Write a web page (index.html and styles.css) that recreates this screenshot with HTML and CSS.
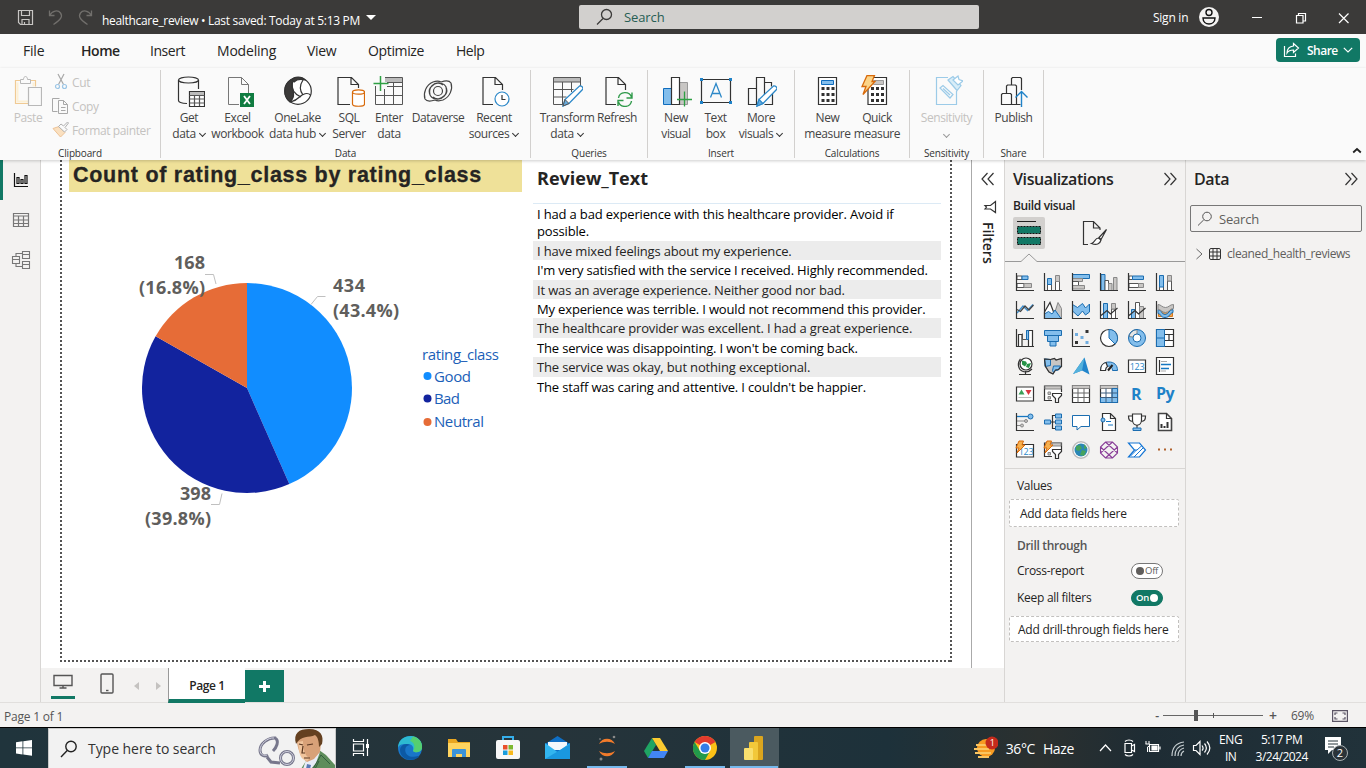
FILE: index.html
```html
<!DOCTYPE html>
<html lang="en">
<head>
<meta charset="utf-8">
<title>healthcare_review</title>
<link rel="stylesheet" href="styles.css">
</head>
<body>
<div class="app">
<header class="titlebar">
  <svg class="qat" width="84" height="20" viewBox="0 0 84 20" fill="none" stroke="#c8c6c4" stroke-width="1.2">
    <path d="M1.500 3.500h14v14H3.500l-2-2zM4.500 3.500v5h8v-5M5 17.500v-5h7v5M7.500 17.500v-2.500"/>
    <g stroke="#716f6c" stroke-width="1.300"><path d="M32.500 3.500v5h5M32.500 8.500c3-5 8.500-6 11-2.500s.5 6.500-7 11.500"/><path d="M74.500 3.500v5h-5M74.500 8.500c-3-5-8.500-6-11-2.500s-.5 6.500 7 11.500"/></g>
  </svg>
  <div class="doc-name">healthcare_review • Last saved: Today at 5:13 PM</div>
  <div class="caret-white"></div>
  <div class="top-search">
    <svg width="18" height="18" viewBox="0 0 18 18" fill="none" stroke="#3b3a39" stroke-width="1.300"><circle cx="10.500" cy="6.500" r="5"/><path d="M7 10.500L1 16.500"/></svg>
    <span>Search</span>
  </div>
  <div class="sign-in">Sign in</div>
  <svg class="avatar" width="20" height="20" viewBox="0 0 20 20"><circle cx="10" cy="10" r="10" fill="#f3f2f1"/><g fill="none" stroke="#111" stroke-width="1.400"><circle cx="10" cy="5.500" r="3"/><path d="M4 11h12c0 4-3 6-6 6s-6-2-6-6z"/></g></svg>
  <svg class="win-btns" width="100" height="14" viewBox="0 0 100 14" fill="none" stroke="#fff" stroke-width="1.200"><path d="M1 6.500h10M88 2.500l9.500 9.500M97.500 2.500L88 12"/><path d="M45.500 4.500h6.500v7.500h-6.500zM47.500 4.500v-2h7v7.500h-2"/></svg>
</header>

<nav class="tabs">
  <span class="tab t-file">File</span><span class="tab t-home">Home</span><span class="tab t-insert">Insert</span><span class="tab t-model">Modeling</span><span class="tab t-view">View</span><span class="tab t-opt">Optimize</span><span class="tab t-help">Help</span>
  <button class="share"><svg width="17" height="16" viewBox="0 0 17 16" fill="none" stroke="#fff" stroke-width="1.200"><path d="M1.500 4v10.500h11v-3"/><path d="M10.500 1.500l5 4.500-5 4.500V8c-3 0-5 .5-6.500 3 0-4 2.500-6.500 6.500-7z"/></svg><span>Share</span><svg width="10" height="6" viewBox="0 0 10 6" fill="none" stroke="#fff" stroke-width="1.200"><path d="M.8.8L5 5 9.200.8"/></svg></button>
</nav>

<section class="ribbon">
  <div class="group g-clip">
    <div class="items">
      <div class="cmd c-paste off"><svg width="28" height="32" viewBox="0 0 28 32" fill="none"><path d="M7.500 5.500h-6v23h13M16.500 5.500h5v6" stroke="#f0ca94" stroke-width="1.200"/><path d="M3.500 7.500v19H14M19.500 7.500v4" stroke="#fdf0d4" stroke-width="2"/><path d="M6.500 8.500v-4h3c0-4 4-4 4 0h3v4z" fill="#fafafa" stroke="#b8b8b8"/><path d="M14.500 12.500h13v18h-13z" fill="#fafafa" stroke="#b8b8b8" stroke-width="1.200"/></svg><span>Paste</span></div>
      <div class="clip-list off">
        <div><svg width="18" height="18" viewBox="0 0 18 18" fill="none" stroke="#a8a8a8" stroke-width="1.200"><path d="M6 1l5.500 10.500M12 1L6.500 11.500"/><g stroke="#9cc6e6"><circle cx="5.500" cy="13.500" r="2"/><circle cx="12.500" cy="13.500" r="2"/></g></svg><span>Cut</span></div>
        <div><svg width="18" height="18" viewBox="0 0 18 18" fill="none" stroke="#a8a8a8"><path d="M7.500 1.500h-7v13h5M6.500 3.500h5l4 4v9h-9zM11.500 3.500v4h4M9 10.500h4.500M9 13.500h4.500"/></svg><span>Copy</span></div>
        <div><svg width="18" height="18" viewBox="0 0 18 18" fill="none" stroke="#b0b0b0"><path d="M1 7.500l6-2 6 6-4.500 4.500z" fill="#fae0c0" stroke="#eec396"/><path d="M6.500 5.500l2.500-2.500 2.500 2 4-4 1 1-3.500 4.500 2 2-2.500 2.500z" fill="#fafafa"/></svg><span>Format painter</span></div>
      </div>
    </div>
    <div class="glabel">Clipboard</div>
  </div>
  <div class="group g-data">
    <div class="items">
      <div class="cmd w48"><svg width="32" height="32" viewBox="0 0 32 32" fill="none" stroke="#333" stroke-width="1.200"><path d="M14 28.500C8 28.500 5.500 27 5.500 25.500V5M25.500 14V5"/><ellipse cx="15.500" cy="5" rx="10" ry="3"/><path d="M16.500 16.500h15v15h-15z" fill="#fff"/><path d="M17 17h14v3H17z" fill="#bbb" stroke="none"/><path d="M16.500 20.500h15M16.500 24h15M16.500 28h15M21.500 20v11M26.500 20v11" stroke="#555"/></svg><span>Get</span><span>data<i class="cv"></i></span></div>
      <div class="cmd w49"><svg width="32" height="32" viewBox="0 0 32 32" fill="none" stroke="#777"><path d="M17 29.500H6.500v-27h13l7 7V18M19.500 2.500v7h7"/><path d="M18 18h14v14H18z" fill="#107c41" stroke="none"/><path d="M22 21l6 8M28 21l-6 8" stroke="#fff" stroke-width="1.800"/></svg><span>Excel</span><span>workbook</span></div>
      <div class="cmd w71"><svg width="32" height="32" viewBox="0 0 32 32" fill="none" stroke="#333" stroke-width="1.200"><circle cx="16" cy="16" r="13.300" fill="#fff"/><path d="M9 5C1 9 1 22 8 27c3-3 4-5 3.500-9S9 10 11 6z" fill="#3b3a39"/><path d="M10 5c2-4 10-4 13 0-4-1-8-1-11 2z" fill="#3b3a39"/><path d="M10 7c-1 7 2 12 9 15M21 5c-4 6-3 11 0 15M28.500 20c-3-3-8-1-11 2s-5 4-9 5"/></svg><span>OneLake</span><span>data hub<i class="cv"></i></span></div>
      <div class="cmd w32"><svg width="32" height="32" viewBox="0 0 32 32" fill="none" stroke="#333" stroke-width="1.200"><path d="M17 29.500H5v-27h13.500l7 7V13M18 2.500v7h7.500"/><g stroke="#d86a0b"><path d="M19.500 17v12c0 3 12 3 12 0V17" fill="#fff"/><ellipse cx="25.500" cy="17" rx="6" ry="2.200" fill="#fff"/></g></svg><span>SQL</span><span>Server</span></div>
      <div class="cmd w48"><svg width="32" height="32" viewBox="0 0 32 32" fill="none" stroke="#555"><path d="M12 3h17v4H12z" fill="#bbb" stroke="none"/><path d="M2.500 11v18.500h27v-27H12M2.500 20.500h27M14 11.500h15.500M11.500 14v15.500M20.500 7v22.500M14 7.500h15"/><path d="M7.500 1v15M.5 8.500h15" stroke="#2ea043" stroke-width="1.500"/></svg><span>Enter</span><span>data</span></div>
      <div class="cmd w50"><svg width="32" height="32" viewBox="0 0 32 32" fill="none" stroke="#444" stroke-width="1.200"><circle cx="16" cy="16" r="4.500"/><path d="M8 20c-2-8 4-13 10-12 7 1 9 9 4 13-3 3-8 4-11 1M24 12c2 8-4 13-10 12-7-1-9-9-4-13 3-3 8-4 11-1"/><path d="M19 7c3-1 8-2 10 1 2 6-1 14-8 17-3 1-6 1-8 0M13 25c-3 1-8 2-10-1C1 18 4 10 11 7c3-1 6-1 8 0"/></svg><span>Dataverse</span></div>
      <div class="cmd w62"><svg width="32" height="32" viewBox="0 0 32 32" fill="none" stroke="#333" stroke-width="1.200"><path d="M15 29.500H5v-27h12.500l7 7V15M17 2.500v7h7.500"/><circle cx="24" cy="24" r="7" fill="#fff" stroke="#2c88c8"/><path d="M24 20v4.500h3.500"/></svg><span>Recent</span><span>sources<i class="cv"></i></span></div>
    </div>
    <div class="glabel">Data</div>
  </div>
  <div class="group g-query">
    <div class="items">
      <div class="cmd w52"><svg width="32" height="32" viewBox="0 0 32 32" fill="none" stroke="#555"><path d="M3 3h26v4H3z" fill="#bbb" stroke="none"/><path d="M14 29.500H2.500v-27h27v10M2.500 7h27M2.500 14.500h20M2.500 22h13M11.500 7v22M20.500 7v10"/><path d="M12 31l2-6.500L28.500 11q3-.5 3.500 3L18 28.500z" fill="#fff" stroke="#2c88c8" stroke-width="1.300"/><path d="M12 31l2-6.500 4 4z" fill="#66acdf"/></svg><span>Transform</span><span>data<i class="cv"></i></span></div>
      <div class="cmd w48"><svg width="32" height="32" viewBox="0 0 32 32" fill="none" stroke="#333" stroke-width="1.200"><path d="M15 29.500H5v-27h12.500l7 7V15M17 2.500v7h7.500"/><g stroke="#2f9a4a" stroke-width="1.400"><path d="M17.500 23c1-7 11-7 13-1M31 17.500V23h-5.500M30.500 26c-1 7-11 7-13 1M17 31v-5.500h5.500"/></g></svg><span>Refresh</span></div>
    </div>
    <div class="glabel">Queries</div>
  </div>
  <div class="group g-ins">
    <div class="items">
      <div class="cmd w40"><svg width="32" height="32" viewBox="0 0 32 32" fill="none"><path d="M3.500 13.500h8v16h-8z" fill="#83beec" stroke="#0f6cbd"/><path d="M19 7.500h8.500v22H19z" fill="#c8c6c4" stroke="#999"/><path d="M11.500 2.500h8v27h-8z" fill="#fff" stroke="#333" stroke-width="1.200"/><path d="M24.500 16.500v15M17 24.500h15" stroke="#2ea043" stroke-width="1.300"/></svg><span>New</span><span>visual</span></div>
      <div class="cmd w39"><svg width="32" height="32" viewBox="0 0 32 32" fill="none"><path d="M1.500 4.500h29v23h-29z" stroke="#333" stroke-width="1.200"/><path d="M10.500 22.500L16 8.500l5.500 14M12.500 18.500h7" stroke="#2c88c8" stroke-width="1.300"/><path d="M0 3h3v3H0zM29 3h3v3h-3zM0 26h3v3H0zM29 26h3v3h-3z" fill="#1f82c8"/></svg><span>Text</span><span>box</span></div>
      <div class="cmd w52"><svg width="32" height="32" viewBox="0 0 32 32" fill="none" stroke="#333" stroke-width="1.200"><path d="M3.500 13.500h8v16h-8zM11.500 29.500v-27h8v20M19.500 7.500h7v4M27.500 18v11.500h-8"/><path d="M12 31l2-6.500L28.500 11q3-.5 3.500 3L18 28.500z" fill="#fff" stroke="#2c88c8" stroke-width="1.300"/><path d="M12 31l2-6.500 4 4z" fill="#66acdf" stroke="#2c88c8"/></svg><span>More</span><span>visuals<i class="cv"></i></span></div>
    </div>
    <div class="glabel">Insert</div>
  </div>
  <div class="group g-calc">
    <div class="items">
      <div class="cmd w49"><svg width="32" height="32" viewBox="0 0 32 32" fill="none"><path d="M6.500 2.500h18v27h-18z" fill="#fff" stroke="#333" stroke-width="1.200"/><path d="M9.500 5.500h12v4h-12z" fill="#83beec" stroke="#0f6cbd"/><path d="M9.500 13.500h13M9.500 19.500h13M9.500 25.500h13" stroke="#333" stroke-width="3" stroke-dasharray="3 2"/></svg><span>New</span><span>measure</span></div>
      <div class="cmd w50"><svg width="32" height="32" viewBox="0 0 32 32" fill="none"><path d="M7 2.500h18.500v27H7z" fill="#fff" stroke="#333" stroke-width="1.200"/><path d="M12.500 5.500h10v4h-10z" fill="#c8c6c4" stroke="#999"/><path d="M10 13.500h13M10 19.500h13M10 25.500h13" stroke="#333" stroke-width="3" stroke-dasharray="3 2"/><path d="M6 .5h7.500l-2.500 6h3L2 19.500 5 11.500H1z" fill="#fcd488" stroke="#d86a0b" stroke-width="1.300"/></svg><span>Quick</span><span>measure</span></div>
    </div>
    <div class="glabel">Calculations</div>
  </div>
  <div class="group g-sens">
    <div class="items">
      <div class="cmd w73 off"><svg width="32" height="32" viewBox="0 0 32 32" fill="none" stroke="#9ccbe8" stroke-width="1.200"><path d="M17 2.500H5.500v27h20V16"/><path d="M9 13l3-2.500 10 9-3 3.500z"/><path d="M12 13.500l7 6.500"/><path d="M17 5l5-3.500 8 9-4 5z" fill="#d8edf8"/><path d="M22 5l5-4 1 3.500 4 1.500-5 4z" fill="#fff"/></svg><span>Sensitivity</span><span><i class="cv alone"></i></span></div>
    </div>
    <div class="glabel">Sensitivity</div>
  </div>
  <div class="group g-share">
    <div class="items">
      <div class="cmd w59"><svg width="32" height="32" viewBox="0 0 32 32" fill="none" stroke="#333" stroke-width="1.200"><path d="M4.500 18.500h8l1 1v10h-10v-10zM8.500 18v-7l1-1h8l1 1v18.500h-5M13.500 10V3.500l1-1h8l1 1V15M18.500 29.500h4"/><path d="M23.500 32V16.500M17.500 22.500l6-6 6 6" stroke="#1f82c8" stroke-width="1.400"/></svg><span>Publish</span></div>
    </div>
    <div class="glabel">Share</div>
  </div>
  <svg class="collapse" width="10" height="7" viewBox="0 0 10 7" fill="none" stroke="#222" stroke-width="1.800"><path d="M1.200 5.500L5 2l3.800 3.500"/></svg>
</section>

<main class="body">
  <aside class="rail">
    <div class="rail-item on"><svg width="18" height="18" viewBox="0 0 18 18" fill="none" stroke="#111" stroke-width="1.200"><path d="M2.500 2v13.500H16M5 6.500h2v6H5zM9 8.500h2v4H9zM13 4.500h2v8h-2z"/></svg></div>
    <div class="rail-item"><svg width="18" height="18" viewBox="0 0 18 18" fill="none" stroke="#777" stroke-width="1.200"><path d="M1.500 2.500h15v13h-15zM1.500 5h15M1.500 9h15M1.500 12.500h15M6.500 5v10.500M11.500 5v10.500"/></svg></div>
    <div class="rail-item"><svg width="20" height="20" viewBox="0 0 20 20" fill="none" stroke="#777" stroke-width="1.100"><path d="M1.500 6.500h7v7h-7zM1.500 9.500h7M11.500 1.500h7v7h-7zM11.500 4.500h7M11.500 11.500h7v7h-7zM11.500 14.500h7M5 6.500v-3h6.500M5 13.500v3h6.500"/></svg></div>
  </aside>

  <div class="center">
    <div class="canvas-row">
      <div class="canvas">
        <div class="report-page">
          <section class="pie-visual">
            <h2>Count of rating_class by rating_class</h2>
            <svg class="pie" width="453" height="350" viewBox="69 192 453 350">
              <path d="M247 388V283a105 105 0 0 1 42.300 201.100z" fill="#118dff"/>
              <path d="M247 388l42.300 96.100A105 105 0 0 1 155.600 336.300z" fill="#12239e"/>
              <path d="M247 388l-91.400-51.700A105 105 0 0 1 247 283z" fill="#e66c37"/>
              <g fill="none" stroke="#c0c0c0"><path d="M205 274.500h8.500l2.500 9.500M311 304.500l6.500-8h8M211 504.500h8.500l2.500-11"/></g>
              <g class="dlabel"><text x="205" y="269" text-anchor="end" textLength="31">168</text><text x="205" y="294" text-anchor="end" textLength="66">(16.8%)</text><text x="333" y="292" textLength="32">434</text><text x="333" y="317" textLength="66">(43.4%)</text><text x="211" y="500" text-anchor="end" textLength="31">398</text><text x="211" y="525" text-anchor="end" textLength="66">(39.8%)</text></g>
              <g class="legend"><text x="422" y="360" textLength="77">rating_class</text><text x="434" y="382" textLength="37">Good</text><text x="434" y="404" textLength="26">Bad</text><text x="434" y="427" textLength="50">Neutral</text></g>
              <circle cx="427.500" cy="376" r="4" fill="#118dff"/><circle cx="427.500" cy="398.500" r="4" fill="#12239e"/><circle cx="427.500" cy="422" r="4" fill="#e66c37"/>
            </svg>
          </section>
          <section class="table-visual">
            <h2>Review_Text</h2>
            <ul>
              <li class="tall">I had a bad experience with this healthcare provider. Avoid if<br>possible.</li>
              <li>I have mixed feelings about my experience.</li>
              <li>I'm very satisfied with the service I received. Highly recommended.</li>
              <li>It was an average experience. Neither good nor bad.</li>
              <li>My experience was terrible. I would not recommend this provider.</li>
              <li>The healthcare provider was excellent. I had a great experience.</li>
              <li>The service was disappointing. I won't be coming back.</li>
              <li>The service was okay, but nothing exceptional.</li>
              <li>The staff was caring and attentive. I couldn't be happier.</li>
            </ul>
          </section>
        </div>
      </div>
      <div class="filters">
        <svg width="14" height="14" viewBox="0 0 14 14" fill="none" stroke="#333" stroke-width="1.200"><path d="M6.500 1L1 7l5.500 6M12.500 1L7 7l5.500 6"/></svg>
        <svg class="funnel" width="14" height="14" viewBox="0 0 14 14" fill="none" stroke="#333" stroke-width="1.200"><path d="M12.500 1.500v11L7.500 9H2l1.500-2L2 5.500h5.500z"/></svg>
        <span>Filters</span>
      </div>
    </div>
    <div class="pagebar">
      <div class="view-desktop"><svg width="20" height="16" viewBox="0 0 20 16" fill="none" stroke="#555" stroke-width="1.400"><path d="M1 2.500h18v10H1zM10 12.500V15M6.500 15h7"/></svg></div>
      <svg class="view-phone" width="14" height="22" viewBox="0 0 14 22" fill="none" stroke="#555" stroke-width="1.400"><rect x="1" y="1" width="12" height="19" rx="1"/><path d="M6 17.500h2.500"/></svg>
      <i class="arr left"></i><i class="arr right"></i>
      <div class="page-tab">Page 1</div>
      <div class="add-page"></div>
    </div>
  </div>

  <aside class="viz">
    <header><b>Visualizations</b><svg width="14" height="14" viewBox="0 0 14 14" fill="none" stroke="#333" stroke-width="1.200"><path d="M1.500 1L7 7l-5.500 6M7.500 1L13 7l-5.500 6"/></svg></header>
    <div class="build">Build visual</div>
    <div class="modes">
      <div class="mode on"><svg width="26" height="26" viewBox="0 0 26 26"><path d="M1 1.500h19" stroke="#222"/><path d="M1.500 6.500h23v7h-23zM1.500 17.500h23v7h-23z" fill="#117865" stroke="#111" stroke-dasharray="2 1"/></svg></div>
      <div class="mode"><svg width="26" height="26" viewBox="0 0 26 26" fill="none" stroke="#333" stroke-width="1.200"><path d="M6 24.500H1.500v-23h10l6.500 6.500v2M11.500 1.500v6.500H18"/><path d="M24.500 9.500L17 17.500l2 2zM16.500 18c-4 0-3 4.500-7 5.500 5 2 8.500.5 9.500-3.500z" fill="#fff"/></svg></div>
    </div>
    <svg class="notch" width="180" height="9" viewBox="0 0 180 9"><path d="M0 8.500h16l8-7.500 8 7.500h148" fill="none" stroke="#999"/></svg>
    <div class="gallery">
      <svg viewBox="0 0 18 18"><path d="M1 3h5v3.500H1z" class="w"/><path d="M6 3h6v3.500H6z" class="b"/><path d="M1 10.500h7v4H1z" class="w"/><path d="M8 10.500h7.500v4H8z" class="g"/><path d="M.5 0v17.500H18" class="k"/></svg>
      <svg viewBox="0 0 18 18"><path d="M3.500 11h4v6.500h-4zM11.500 7.500h4v10h-4z" class="w"/><path d="M3.500 5.500h4v6h-4z" class="b"/><path d="M11.500 2.500h4v6h-4z" class="g"/><path d="M.5 0v17.500H18" class="k"/></svg>
      <svg viewBox="0 0 18 18"><path d="M.5 1.500h17v4H.5z" class="b"/><path d="M.5 5.500h10v3H.5z" class="g"/><path d="M.5 8.500h6v4h-6z" class="w"/><path d="M.5 12.500h12v3.500H.5z" class="g"/><path d="M.5 0v17.500H18" class="k"/></svg>
      <svg viewBox="0 0 18 18"><path d="M1 1.500h4v16H1z" class="b"/><path d="M5 7.500h3.500v10H5z" class="w"/><path d="M8.500 10.500H12v7H8.500zM13.500 4.500H17v13h-3.500z" class="g"/><path d="M.5 0v17.500H18" class="k"/></svg>
      <svg viewBox="0 0 18 18"><path d="M1 3h3.500v3.500H1zM1 10.500h10v4H1z" class="w"/><path d="M4.500 3h11v3.500h-11z" class="b"/><path d="M10.500 10.500h5v4h-5z" class="g"/><path d="M.5 0v17.500H18" class="k"/></svg>
      <svg viewBox="0 0 18 18"><path d="M3.500 13h4v4.500h-4zM11.500 8h4v9.500h-4z" class="w"/><path d="M3.500 2.500h4V14h-4z" class="b"/><path d="M11.500 2.500h4V8h-4z" class="g"/><path d="M.5 0v17.500H18" class="k"/></svg>

      <svg viewBox="0 0 18 18"><path d="M1 12l6-7 4.500 4.500L17 3.500" fill="none" stroke="#3b8fd0" stroke-width="1.300"/><path d="M1 8.500l3.500 2L9 5l4 4 4.500-5" fill="none" stroke="#444" stroke-width="1.300"/><path d="M.5 0v17.500H18" class="k"/></svg>
      <svg viewBox="0 0 18 18"><path d="M9 17L14 1.500l3.500 6v10z" class="g"/><path d="M.5 11l5.500-9.500 6 16H.5z" class="w k"/><path d="M.5 17.500V13l4-2.500L8 13l3-4 6 8.500z" class="b"/><path d="M.5 0v17.500H18" class="k"/></svg>
      <svg viewBox="0 0 18 18"><path d="M.5 3.500l5 3 5-4 3 4.500 4-4v8l-4 3-3-4-4.500 5-5.500-5z" class="b"/><path d="M.5 0v17.500H18" class="k"/></svg>
      <svg viewBox="0 0 18 18"><path d="M3.500 2.500h4v15h-4z" class="b"/><path d="M11.500 8h4v9.500h-4z" class="w"/><path d="M11.500 2.500h4V8h-4z" class="g"/><path d="M.5 0v17.500H18M1 14.500l6-5 3.500 3.500 7-6" class="k"/></svg>
      <svg viewBox="0 0 18 18"><path d="M3.500 8.500h4v9h-4z" class="b"/><path d="M7.500 1.500h4v16h-4z" class="w"/><path d="M11.500 5.500h4v12h-4z" class="g"/><path d="M.5 0v17.500H18M1 14.500l6-5 3.500 3.500 7-6" class="k"/></svg>
      <svg viewBox="0 0 18 18"><path d="M2.500 8.500h14v7h-14z" fill="#f2a24c" stroke="#d8791c"/><path d="M2 8.500c4 0 3 5 7 5s4-5 8-5v3c-3 0-3 5-8 5s-4-4-7-4z" class="b"/><path d="M2 3.500c3 0 4 3 7.500 3s4-3 8-3v4c-4 0-4 4-8 4s-4-3-7.500-3z" class="g"/><path d="M.5 0v17.500H18" class="k"/></svg>

      <svg viewBox="0 0 18 18"><path d="M2.500 5.500h3.500v12H2.500zM12.500 1.500h4v16h-4z" class="w k"/><path d="M6.500 4.500v6h4v-9h2v7" fill="none" stroke="#555"/><path d="M10.500 1.500h2v9h-2z" class="b"/><path d="M.5 0v17.500H18" class="k"/></svg>
      <svg viewBox="0 0 18 18"><path d="M.5 1.500h17v5H.5zM3.500 6.500h11v6h-11zM6 12.500h6v4.500H6z" class="b"/></svg>
      <svg viewBox="0 0 18 18"><path d="M.5 0v17.500H18" class="k"/><path d="M13.500 1h3v3h-3zM3 12h3v3H3z" fill="#333"/><path d="M3 4h3v3H3zM8.500 7h3v3h-3zM13.500 12h3v3h-3z" fill="#72aee0"/></svg>
      <svg viewBox="0 0 18 18"><circle cx="9" cy="9" r="8.500" class="w k"/><path d="M9 9V.5a8.500 8.500 0 0 1 6 14.500z" class="b"/></svg>
      <svg viewBox="0 0 18 18"><circle cx="9" cy="9" r="6.200" fill="none" stroke="#83beec" stroke-width="4.500"/><path d="M9 .5a8.500 8.500 0 0 0-8 7l4 .5A4 4 0 0 1 9 5z" fill="#e6e6e6" stroke="#888"/><circle cx="9" cy="9" r="8.500" class="o"/><circle cx="9" cy="9" r="4" class="w o"/></svg>
      <svg viewBox="0 0 18 18"><path d="M.5.500h17v17H.5z" class="w k"/><path d="M.5.500h8v17h-8zM.5 9h8" class="b"/><path d="M9 5.500h8.500M9 11.500h8.500M13 5.500v6" class="k"/></svg>

      <svg viewBox="0 0 18 18"><circle cx="10" cy="7" r="6" fill="#fff" stroke="#333" stroke-width="1.200"/><path d="M6 3.500l4 1 1 2-2 3-3-2zM11 7l4-1-2 5-3-1z" fill="#259347"/><path d="M4.500 2C1 6 2 12 6 14s8 0 10-2M9.500 14v3M3 17.500h12" class="k"/></svg>
      <svg viewBox="0 0 18 18"><path d="M.5 2l6 .5 4-1 1.500 1.500 5.500-1.500v8l-3 3-3 .5L9 17l-4-2-3.500-5.500z" class="g"/><path d="M.5 2l6 .5v6l-5.500 1zM9.500 9h7l-2 4-3 .5-2 2-1-2z" class="b"/><path d="M.5 2l6 .5 4-1 1.500 1.500 5.500-1.500v8l-3 3-3 .5L9 17l-4-2-3.500-5.500z" class="k"/></svg>
      <svg viewBox="0 0 18 18"><path d="M12.500.5l5 17-7.500-4-9 3.500z" fill="#2185cb"/><path d="M12.500.5L1 17l9-3.500z" fill="#53b1dc"/></svg>
      <svg viewBox="0 0 18 18"><path d="M.5 13.500C.5 8 4 5 9 5s8.500 3 8.500 8.500h-5C12.500 11 11 9 9 9s-3.500 2-3.500 4.500z" class="b"/><path d="M.5 13.500C.5 9 3 6 6 5.500l1.500 4c-1 .5-2 2-2 4z" class="w k"/><path d="M8 13.500L12.500 8" stroke="#222" stroke-width="2"/></svg>
      <svg viewBox="0 0 18 18"><path d="M.5 3h17v12.500H.5z" class="w k"/><text x="9" y="13" class="tiny">123</text></svg>
      <svg viewBox="0 0 18 18"><path d="M.5.500h17v17H.5z" class="w k"/><path d="M3.500 3v12" class="k"/><path d="M5 4.500h6M5 14h5" stroke="#aaa"/><path d="M5 7.500h10M5 11.500h8" stroke="#1677c2" stroke-width="1.500"/></svg>

      <svg viewBox="0 0 18 18"><path d="M.5 2h17v14H.5z" class="w k"/><path d="M2.500 9.500l3-5 3 5z" fill="#3b9f58"/><path d="M9.500 5h6l-3 5z" fill="#d9363e"/><path d="M2.500 12.500h13" stroke="#bbb"/></svg>
      <svg viewBox="0 0 18 18"><path d="M8 15.500H.5V1h17v6" class="w k"/><path d="M1 1h16v3H1z" class="g"/><path d="M4 7h2.500v2.500H4zM4 11.500h2.500V14H4z" class="g"/><path d="M8.500 8.500h9v2l-3 3v4h-3v-4l-3-3z" class="w k"/></svg>
      <svg viewBox="0 0 18 18"><path d="M.5.500h17v17H.5z" class="w k"/><path d="M.5.500h17v3H.5z" class="g"/><path d="M.5 8h17M.5 12.500h17M6 3.500v14M12 3.500v14" fill="none" stroke="#666"/></svg>
      <svg viewBox="0 0 18 18"><path d="M.5.500h17v17H.5z" class="w k"/><path d="M.5.500h17v3H.5z" class="g"/><path d="M12 3.500h5.500v14H.5v-5H12z" class="b"/><path d="M.5 8h17M.5 12.500h17M6 3.500v14M12 3.500v14" fill="none" stroke="#3c5f80"/></svg>
      <svg viewBox="0 0 18 18"><text x="8" y="15" class="letter">R</text></svg>
      <svg viewBox="0 0 18 18"><text x="9" y="14" class="letter">Py</text></svg>

      <svg viewBox="0 0 18 18"><path d="M1 3.500h12" stroke="#1677c2" stroke-width="1.300"/><path d="M1 8h9M1 12.500h5" stroke="#888"/><circle cx="14.500" cy="3.500" r="2.500" class="b"/><circle cx="10" cy="8" r="1.500" class="g"/><circle cx="6" cy="12.500" r="1.500" class="g"/><path d="M.5 0v17.500H18" class="k"/></svg>
      <svg viewBox="0 0 18 18"><path d="M5.500 9h6M8.500 9V2.500h3M8.500 9v6.500h3" class="k"/><path d="M.5 7h6v4h-6zM11.500 1h6v4h-6zM11.500 7h6v4h-6zM11.500 13h6v4h-6z" class="b"/></svg>
      <svg viewBox="0 0 18 18"><path d="M.5 2.500h17v11H9l-4 3.500v-3.500H.5z" class="w o"/></svg>
      <svg viewBox="0 0 18 18"><path d="M2.500 5V.5h8l5 5v12h-13V9M10.500.500v5h5" class="w k"/><path d="M6 8.500h5M8 12h5" stroke="#1677c2"/><circle cx="3" cy="7" r="2" class="b"/></svg>
      <svg viewBox="0 0 18 18"><path d="M4.500 1h9v6c0 7-9 7-9 0zM4.500 3h-4c0 4 1 5 4.500 5.500M13.500 3h4c0 4-1 5-4.500 5.500" class="w k"/><path d="M9 12v3" class="k"/><path d="M5 15h8v2.500H5z" class="b"/></svg>
      <svg viewBox="0 0 18 18"><path d="M2.500.500h8l5 5v12h-13z" fill="#fff" stroke="#444" stroke-width="1.600"/><path d="M10.500.500v5h5" class="k"/><path d="M5.500 15v-4M8.500 15v-2M11.500 15V9" stroke="#333" stroke-width="2"/></svg>

      <svg viewBox="0 0 18 18"><path d="M.5 3.500h17v12.500H.5z" class="w k"/><text x="10" y="13.500" class="tiny">123</text><path d="M3 0h4.500L6 4h3L1 12l2-5H0z" class="bolt"/></svg>
      <svg viewBox="0 0 18 18"><path d="M8 15.500H.5V2h17v6" class="w k"/><path d="M8 2h9v3H8z" class="g"/><path d="M4 11.500h2.500V14H4z" class="g"/><path d="M8.500 8.500h9v2l-3 3v4h-3v-4l-3-3z" class="w k"/><path d="M3 0h4.500L6 4h3L1 12l2-5H0z" class="bolt"/></svg>
      <svg viewBox="0 0 18 18"><circle cx="9" cy="9" r="8.200" fill="#fff" stroke="#bbb" stroke-width="1.500"/><circle cx="9" cy="9" r="6.500" fill="#2a87b5"/><path d="M4 5l4-1 2 3-3 3-3-1zM10 9l4 1-2 5-4-1zM12 3l3 4-3 1z" fill="#46a35c"/></svg>
      <svg viewBox="0 0 18 18"><path d="M5.500 1h7L17.500 6v6l-5 5h-7l-5-5V6zM5.500 1l12 11M12.500 1L.5 12M.5 6l12 11M17.500 6l-12 11" fill="none" stroke="#8a3e98" stroke-width="1.100"/></svg>
      <svg viewBox="0 0 18 18"><path d="M.5 2h11l6 7-6 7H.5l6-7z" fill="#fff" stroke="#1475d4" stroke-width="1.200"/><path d="M6.500 9H9l5-4.500M2.500 15l6-6M6 16l9-9" stroke="#1475d4" fill="none"/></svg>
      <svg viewBox="0 0 18 18"><path d="M2 8.500h2M8 8.500h2M14 8.500h2" stroke="#b0612c" stroke-width="1.800"/></svg>
    </div>
    <div class="fields">
      <div class="flabel">Values</div>
      <div class="drop d1">Add data fields here</div>
      <div class="flabel strong">Drill through</div>
      <div class="toggle-row"><span>Cross-report</span><div class="toggle"><i></i>Off</div></div>
      <div class="toggle-row"><span>Keep all filters</span><div class="toggle is-on">On<i></i></div></div>
      <div class="drop d2">Add drill-through fields here</div>
    </div>
  </aside>

  <aside class="data">
    <header><b>Data</b><svg width="14" height="14" viewBox="0 0 14 14" fill="none" stroke="#333" stroke-width="1.200"><path d="M1.500 1L7 7l-5.500 6M7.500 1L13 7l-5.500 6"/></svg></header>
    <div class="data-search"><svg width="16" height="16" viewBox="0 0 16 16" fill="none" stroke="#555"><circle cx="10" cy="5.500" r="4.300"/><path d="M6.800 8.800L1 14.500"/></svg><span>Search</span></div>
    <div class="tbl"><svg width="8" height="12" viewBox="0 0 8 12" fill="none" stroke="#666"><path d="M1.500 1L7 6l-5.500 5"/></svg><svg width="12" height="12" viewBox="0 0 12 12" fill="none" stroke="#333"><rect x=".5" y=".5" width="11" height="11" rx="1.500"/><path d="M.5 4h11M.5 8h11M4 .5v11M8 .5v11"/></svg><span>cleaned_health_reviews</span></div>
  </aside>
</main>

<footer class="status"><span class="pg">Page 1 of 1</span><div class="zoomer"><b>-</b><div class="track"><i class="thumb"></i><i class="tick"></i></div><b class="plus">+</b><span>69%</span><svg width="16" height="12" viewBox="0 0 16 12" fill="none" stroke="#5b5565" stroke-width="1.200"><path d="M.6.600h14.800v10.800H.6zM3 5V3h2.500M10.500 3H13v2M3 7v2h2.500M10.500 9H13V7"/></svg></div></footer>

<footer class="taskbar">
  <div class="start"><svg width="16" height="16" viewBox="0 0 16 16" fill="#fff"><path d="M0 2.200l6.500-.9v6.200H0zM7.300 1.200L16 0v7.500H7.300zM0 8.300h6.500v6.200L0 13.600zM7.300 8.300H16v7.500l-8.700-1.200z"/></svg></div>
  <div class="win-search">
    <svg width="18" height="18" viewBox="0 0 18 18" fill="none" stroke="#222" stroke-width="1.400"><circle cx="11" cy="6.500" r="5.200"/><path d="M7.200 10.500L1 17"/></svg>
    <span>Type here to search</span>
    <svg class="art" width="78" height="40" viewBox="258 728 78 40">
      <g fill="none" stroke="#77778c" stroke-width="3"><path d="M277 737c-8-1-16 6-16 12 0 6 5 7 8 5M276 737c5 3 1 10-2 13"/><circle cx="288" cy="757" r="6.500"/><path d="M268 756l4 5 9 1"/></g>
      <g fill="none" stroke="#d2d2e0"><path d="M275 737c-6-1-14 6-14 12 0 5 4 6 7 5"/><circle cx="288" cy="757" r="6.500"/></g>
      <path d="M302 768l5-8 13-11 7 5 9 10v4z" fill="#5e8d5b"/><path d="M304 768l3-9 14-8-4 11-5 6z" fill="#e8ecf6"/><path d="M308 763l4 1-1 4h-4z" fill="#5878b5"/>
      <path d="M298 741c0-10 6-12 13-12 9 0 12 5 11 13l-1 9-6 7-7 3c-6-4-9-12-10-20z" fill="#d8a178"/>
      <path d="M299 741c1 7 1 14 5 17l4 2 3-3c-5-1-7-9-7-17z" fill="#f0c49c"/>
      <path d="M297 743c-3-11 3-15 13-15 12 0 15 7 13 15l-3 3c0-5-1-10-4-12-6 3-14 0-19 9z" fill="#644020"/>
      <path d="M300 743l4 1M308 744l6-1M304 745l-1 7h3M305 757h6" stroke="#59351f" fill="none" stroke-width="1.200"/>
      <path d="M314 768l8-14 9 9M320 760l-4 8" stroke="#315f3d" fill="none"/>
    </svg>
  </div>
  <div class="apps">
    <div class="app-ico"><svg width="18" height="18" viewBox="0 0 18 18" fill="none" stroke="#fff" stroke-width="1.200"><path d="M1.500 5h10v7h-10zM1.500 0v2.500h10V0M1.500 17v-2.500h10V17M15.500 0v17"/><path d="M14 5h3v4h-3z" fill="#fff" stroke="none"/></svg></div>
    <div class="app-ico"><svg width="26" height="26" viewBox="0 0 26 26"><circle cx="13" cy="13" r="12" fill="#1976c9"/><path d="M1 13C1 5 7 1 14 1s12 6 11 12c-1 5-7 5-9 3 1-3 0-7-5-7S2 9 1 13z" fill="#2dbad1"/><path d="M16 1.500c6 1 9.500 6 9 11.500-1 5-7 5-9 3 3-4 1-9-3-10z" fill="#55cf70"/><path d="M9 12c-3 6 3 12 12 9l1 1c-8 6-19 2-19-7 0-4 5-8 10-5-2 0-3 1-4 2z" fill="#0c59a4"/></svg></div>
    <div class="app-ico"><svg width="24" height="20" viewBox="0 0 24 20"><path d="M1 1h8l2 3h12v14H1z" fill="#e9a620"/><path d="M1 5h22v14H1z" fill="#ffd45f"/><path d="M5 19v-7q0-1 1-1h12q1 0 1 1v7h-4v-3H9v3z" fill="#3b93d8"/></svg></div>
    <div class="app-ico"><svg width="24" height="26" viewBox="0 0 24 26"><path d="M7 7V2h10v5" fill="none" stroke="#35aeea" stroke-width="2"/><rect x="0" y="5" width="24" height="19" rx="2" fill="#f7f7f7"/><path d="M7 10h4.500v4.500H7z" fill="#e9502b"/><path d="M12.500 10H17v4.500h-4.500z" fill="#7cb82f"/><path d="M7 15.500h4.500V20H7z" fill="#199ddd"/><path d="M12.500 15.500H17V20h-4.500z" fill="#f8b91d"/></svg></div>
    <div class="app-ico"><svg width="25" height="26" viewBox="0 0 25 26"><path d="M0 9l12.500-8L25 9v15H0z" fill="#0f6fc5"/><path d="M3 7h19v8H3z" fill="#f2f7fb"/><path d="M0 8l12.500 9L25 8v16H0z" fill="#32b5ef"/><path d="M0 24l25-15v15z" fill="#1a98df"/></svg></div>
    <div class="app-ico run"><svg width="20" height="26" viewBox="0 0 20 26"><path d="M2 9c3-7 13-7 16 0-5-3-11-3-16 0zM2 16c3 7 13 7 16 0-5 3-11 3-16 0z" fill="#f17b2b"/><circle cx="17" cy="2" r="1.300" fill="#8a8a8a"/><circle cx="4" cy="24" r="1.500" fill="#8a8a8a"/><circle cx="3" cy="4" r=".8" fill="#999"/></svg></div>
    <div class="app-ico"><svg width="24" height="22" viewBox="0 0 24 22"><path d="M8 1l4 7-8 13-4-7z" fill="#1fa463"/><path d="M8 1h8l8 13h-8z" fill="#fccb31"/><path d="M8 14h16l-4 7H4z" fill="#4285f4"/></svg></div>
    <div class="app-ico run"><svg width="24" height="24" viewBox="0 0 24 24"><circle cx="12" cy="12" r="12" fill="#fbc116"/><path d="M12 12L1.600 6A12 12 0 0 1 22.400 6z" fill="#e33b2e"/><path d="M1.600 6A12 12 0 0 0 12 24l5-9-10 0z" fill="#229a4b"/><circle cx="12" cy="12" r="6" fill="#fff"/><circle cx="12" cy="12" r="4.500" fill="#347de8"/></svg></div>
    <div class="app-ico run active"><svg width="20" height="26" viewBox="0 0 20 26"><rect x="10" y="1" width="9" height="24" rx="1" fill="#dba51e"/><rect x="5" y="7" width="9" height="18" rx="1" fill="#f2c83a"/><rect x="0" y="13" width="9" height="12" rx="1" fill="#f9df6e"/></svg></div>
  </div>
  <div class="weather"><svg width="24" height="24" viewBox="0 0 24 24"><circle cx="12" cy="12" r="9" fill="#f79b22"/><path d="M2 9h12M0 13h15M1 17h16M4 21h11" stroke="#fac561" stroke-width="2"/><circle cx="18" cy="7" r="6.500" fill="#c42b1c"/><text x="18" y="10" class="badge">1</text></svg><span>36°C</span><span>Haze</span></div>
  <svg class="tray" width="116" height="18" viewBox="1097 739 116 18" fill="none" stroke="#fff" stroke-width="1.200">
    <path d="M1100 751l5.500-6 5.500 6"/><path d="M1125 743.500h6.500v9h-6.500zM1131.500 746l3-1.500v7l-3-1.500M1125 741.500c2-2 6-2 8 0M1125 754.500c2 2 6 2 8 0"/>
    <path d="M1149.500 744.500h9v7h-9zM1160 746.500v3"/><path d="M1152 746h5v4h-5z" fill="#fff"/><path d="M1146 741v3M1149 741v3M1145.500 744h4v2l-2 1v5" stroke-width="1"/>
    <g stroke="#c5cdd0"><path d="M1172 756c0-8 4-13 12-14M1175 756c0-6 3-10 9-11M1178 756c0-4 2-7 6-8M1181 756c0-2 1-4 3-5"/></g>
    <path d="M1193.500 745.500h2.500l4-4v13l-4-4h-2.500zM1202 745.500c1.500 2 1.500 3.500 0 5M1204.500 743.500c2.500 3 2.500 6 0 9M1207 741.500c3.500 4 3.500 9 0 13"/>
  </svg>
  <div class="lang"><span>ENG</span><span>IN</span></div>
  <div class="clock"><span>5:17 PM</span><span>3/24/2024</span></div>
  <svg class="notif" width="26" height="28" viewBox="0 0 26 28"><path d="M2 3h16v13H9l-4 4v-4H2z" fill="#fff"/><path d="M5 7h10M5 10h10M5 13h6" stroke="#24343b"/><circle cx="17" cy="19" r="7.500" fill="#2a3338" stroke="#a9b0b3"/><text x="17" y="23" class="badge n">2</text></svg>
</footer>
</div>
</body>
</html>
```
FILE: styles.css
```css
* { box-sizing: border-box; }
body { margin: 0; font-family: "Open Sans", "Noto Sans", sans-serif; font-size: 12px; color: #252423; overflow: hidden; }
svg { display: block; flex: none; }
h2 { margin: 0; }
.app { width: 1366px; height: 768px; display: flex; flex-direction: column; white-space: nowrap; }

/* title bar */
.titlebar { height: 34px; background: #3b3a39; color: #fff; display: flex; align-items: center; padding-left: 17px; flex: none; }
.doc-name { width: 259px; margin-left: 1px; padding-top: 6px; letter-spacing: -.31px; }
.caret-white { border: 5px solid transparent; border-top-color: #fff; border-bottom: 0; margin-left: 5px; }
.top-search { width: 400px; height: 24px; margin-left: 203px; background: #d2d0ce; border-radius: 2px; display: flex; align-items: center; padding-left: 17px; gap: 10px; color: #275e54; font-size: 13px; letter-spacing: -.1px; }
.sign-in { margin-left: 174px; width: 38px; letter-spacing: -.25px; padding-top: 1px; }
.avatar { margin-left: 8px; }
.win-btns { margin-left: 32px; margin-top: 2px; }

/* ribbon tabs */
.tabs { height: 34px; background: #fafafa; display: flex; align-items: center; flex: none; font-size: 14px; letter-spacing: -.45px; padding-bottom: 2px; }
.tab { flex: none; }
.t-file { margin-left: 23px; width: 58px; letter-spacing: -.2px; }
.t-home { width: 69px; font-weight: 600; }
.t-insert { width: 67px; }
.t-model { width: 90px; letter-spacing: -.2px; }
.t-view { width: 61px; letter-spacing: -.3px; }
.t-opt { width: 88px; letter-spacing: -.35px; }
.share { margin-left: auto; margin-right: 6px; width: 84px; height: 24px; border: 0; border-radius: 4px; background: #117865; color: #fff; display: flex; align-items: center; padding: 0 0 0 7px; font: 600 12px "Open Sans", sans-serif; letter-spacing: -.5px; }
.share span { margin: 0 5px 0 7px; }

/* ribbon */
.ribbon { height: 92px; background: #fafafa; display: flex; padding-top: 2px; flex: none; position: relative; z-index: 1; box-shadow: 0 1px 3px #0003; }
.group { height: 88px; border-right: 1px solid #d2d0ce; display: flex; flex-direction: column; flex: none; color: #444; }
.items { height: 78px; display: flex; flex: none; }
.glabel { text-align: center; font-size: 10px; line-height: 11px; letter-spacing: -.15px; color: #333; }
.g-clip { width: 161px; }
.g-data { width: 370px; }
.g-data .items { padding-left: 4px; }
.g-query { width: 117px; }
.g-query .items { padding-left: 10px; }
.g-ins { width: 147px; }
.g-ins .items, .g-calc .items { padding-left: 8px; }
.g-calc { width: 115px; }
.g-sens { width: 74px; }
.g-share { width: 60px; }
.cmd { display: flex; flex-direction: column; align-items: center; padding-top: 5px; flex: none; letter-spacing: -.42px; }
.cmd span { line-height: 16px; height: 16px; display: flex; align-items: center; }
.cmd svg { margin-bottom: 3px; }
.w32 { width: 32px; } .w39 { width: 39px; } .w40 { width: 40px; } .w48 { width: 48px; } .w49 { width: 49px; } .w50 { width: 50px; } .w52 { width: 52px; } .w59 { width: 59px; } .w62 { width: 62px; } .w71 { width: 71px; } .w73 { width: 73px; }
.c-paste { width: 52px; padding-left: 4px; }
.off { color: #c4c2c0; }
.cv { width: 5px; height: 5px; border: solid #333; border-width: 0 1.5px 1.5px 0; transform: rotate(45deg); margin: -2px 1px 0 4px; }
.cv.alone { margin: 0; border-color: #999; }
.clip-list { display: flex; flex-direction: column; }
.clip-list div { display: flex; align-items: center; gap: 2px; height: 24px; letter-spacing: -.38px; }
.clip-list span { color: #c4c2c0; }
.collapse { margin: 77px 4px 0 auto; }

/* work area */
.body { height: 543px; display: flex; flex: none; background: #f3f2f1; border-bottom: 1px solid #e1dfdd; }
.rail { width: 41px; border-right: 1px solid #d8d6d4; flex: none; }
.rail-item { height: 40px; display: flex; align-items: center; justify-content: center; border-left: 3px solid transparent; padding-right: 1px; }
.rail-item.on { border-color: #117865; }
.center { width: 963px; flex: none; }
.canvas-row { height: 508px; display: flex; }
.canvas { width: 930px; background: #fff; padding: 0 19px; }
.report-page { width: 892px; height: 502px; display: flex; padding-left: 9px; background:
  repeating-linear-gradient(180deg, #555 0 2px, transparent 2px 4px) 0 0 / 2px 100% no-repeat,
  repeating-linear-gradient(180deg, #555 0 2px, transparent 2px 4px) 100% 0 / 2px 100% no-repeat,
  repeating-linear-gradient(90deg, #555 0 2px, transparent 2px 4px) 0 100% / 100% 2px no-repeat; }
.pie-visual { width: 453px; }
.pie-visual h2 { height: 32px; background: #efe199; font: bold 21.5px/30px "Liberation Sans", Arial, sans-serif; letter-spacing: .72px; padding-left: 4px; -webkit-text-stroke: .3px #252423; }
.dlabel { font: bold 18px "Open Sans", sans-serif; fill: #605e5c; }
.legend { font-size: 15px; font-weight: 500; fill: #1b5fb8; }
.table-visual { width: 408px; margin-left: 11px; color: #000; }
.table-visual h2 { height: 44px; border-bottom: 1px solid #dceaf5; font-size: 18px; line-height: 37px; padding-left: 4px; color: #252423; font-weight: 700; }
.table-visual ul { margin: 0; padding: 0; list-style: none; font-size: 13px; font-weight: 500; line-height: 17px; letter-spacing: -.16px; }
.table-visual li { height: 19.4px; padding: 2px 4px 0; }
.table-visual li.tall { height: 36.8px; }
.table-visual li:nth-child(even) { background: #ececec; color: #252423; }
.filters { width: 33px; border-left: 1px solid #aaa; background: #fff; display: flex; flex-direction: column; align-items: center; padding-top: 12px; }
.funnel { margin: 14px 0 8px 4px; }
.filters span { writing-mode: vertical-rl; font-size: 14px; font-weight: 600; line-height: 20px; }

/* page tabs */
.pagebar { height: 35px; display: flex; align-items: center; padding-left: 10px; }
.view-desktop { width: 24px; height: 26px; border-bottom: 3px solid #117865; display: flex; justify-content: center; }
.view-phone { margin: -4px 0 0 25px; }
.arr { border: 4px solid transparent; }
.arr.left { border-right: 5px solid #c4c2c0; border-left: 0; margin-left: 20px; }
.arr.right { border-left: 5px solid #c4c2c0; border-right: 0; margin-left: 17px; }
.page-tab { width: 77px; height: 35px; margin-left: 7px; background: #fff; border-left: 1px solid #999; border-bottom: 4px solid #117865; text-align: center; line-height: 35px; font-weight: 600; letter-spacing: -.4px; }
.add-page { width: 39px; height: 32px; background: linear-gradient(#fff, #fff) center / 11px 3px no-repeat, linear-gradient(#fff, #fff) center / 3px 11px no-repeat, #117865; margin-top: 1px; }

/* panes */
.viz { width: 182px; border-left: 1px solid #d8d6d4; border-right: 1px solid #d8d6d4; flex: none; }
.viz header, .data header { height: 38px; display: flex; align-items: center; justify-content: space-between; padding: 0 8px 0 8px; font-size: 16px; letter-spacing: -.4px; }
.viz header b, .data header b { font-weight: 600; }
.build { height: 17px; line-height: 16px; padding-left: 8px; font-weight: 600; letter-spacing: -.36px; }
.modes { display: flex; gap: 34px; padding: 2px 0 0 8px; }
.mode { width: 32px; height: 32px; display: flex; align-items: center; justify-content: center; }
.mode.on { background: #d2d0ce; border-radius: 2px; }
.notch { margin-top: 4px; height: 9px; }
.gallery { display: grid; grid-template-columns: repeat(6, 18px); grid-auto-rows: 18px; gap: 10px; padding: 11px 0 0 11px; height: 207px; border-bottom: 1px solid #d8d6d4; }
.gallery svg { width: 18px; height: 18px; overflow: visible; }
.b { fill: #83beec; stroke: #1b6db0; }
.g { fill: #c8c6c4; stroke: #888; }
.w { fill: #fff; stroke: #555; }
.k { stroke: #333; fill: none; stroke-width: 1.2; }
.w.k { fill: #fff; }
.o { stroke: #1b6db0; fill: none; }
.w.o { fill: #fff; }
.bolt { fill: #f6b04e; stroke: #d86a0b; }
.tiny { font-size: 9px; fill: #2c88c8; text-anchor: middle; letter-spacing: -.3px; }
.letter { font-size: 16px; font-weight: 700; fill: #1f82c8; text-anchor: middle; letter-spacing: -.5px; }
.fields { padding: 8px 6px 0 4px; letter-spacing: -.28px; }
.flabel { padding-left: 8px; line-height: 17px; height: 22px; }
.flabel.strong { font-weight: 600; color: #555; margin-top: 10px; letter-spacing: -.3px; height: 20px; }
.drop { background: #fff; border: 1px dashed #c2c0be; height: 28px; line-height: 28px; padding-left: 10px; border-radius: 2px; }
.d2 { height: 26px; line-height: 26px; padding-left: 8px; margin-top: 5px; letter-spacing: -.24px; }
.toggle-row { height: 27px; display: flex; align-items: center; justify-content: space-between; padding: 0 16px 0 8px; }
.toggle { width: 32px; height: 16px; border: 1px solid #777; border-radius: 8px; background: #fff; display: flex; align-items: center; justify-content: center; gap: 1px; font-size: 9.5px; color: #605e5c; }
.toggle i { width: 8px; height: 8px; border-radius: 50%; background: #605e5c; }
.toggle.is-on { background: #117865; border-color: #117865; color: #fff; font-weight: 600; }
.toggle.is-on i { background: #fff; }
.data { width: 180px; flex: none; }
.data-search { margin: 7px 4px 0 4px; height: 27px; border: 1px solid #777; border-radius: 2px; display: flex; align-items: center; gap: 6px; padding-left: 6px; font-size: 13px; letter-spacing: -.2px; color: #605e5c; }
.tbl { display: flex; align-items: center; padding: 0 0 0 9px; height: 43px; color: #605e5c; letter-spacing: -.4px; }
.tbl svg + svg { margin: 0 6px 0 6px; }

/* status bar */
.status { height: 24px; background: #f3f2f1; display: flex; align-items: center; justify-content: space-between; flex: none; color: #555; padding: 3px 18px 0 4px; letter-spacing: -.2px; }
.zoomer { display: flex; align-items: center; margin-top: -2px; }
.track { width: 100px; height: 10px; margin: 0 6px 0 4px; background: linear-gradient(#666, #666) center / 100% 1px no-repeat; display: flex; align-items: center; }
.thumb { width: 4px; height: 11px; background: #555; margin-left: 31px; }
.tick { width: 1px; height: 5px; background: #555; margin-left: 15px; }
.zoomer b { font-weight: 600; }
.plus { font-size: 14px; width: 22px; }
.zoomer svg { margin-left: 18px; }

/* taskbar */
.taskbar { height: 41px; border-top: 1px solid #000; background: linear-gradient(90deg, #20343c, #26343a 40%, #1d313a 65%, #2b302f 76%, #1e2c34 84%, #21323a); display: flex; color: #fff; flex: none; align-items: center; }
.start { width: 48px; display: flex; justify-content: center; }
.win-search { width: 288px; height: 40px; background: #f2f2f2; border: 1px solid #c9c9c9; border-bottom: 0; display: flex; align-items: center; padding-left: 11px; color: #333; font-size: 14px; letter-spacing: -.05px; }
.win-search span { margin-left: 10px; }
.art { margin-left: auto; }
.apps { display: flex; height: 40px; }
.app-ico { width: 49.2px; display: flex; align-items: center; justify-content: center; }
.run { background: linear-gradient(#76b9ed, #76b9ed) center bottom / 40px 2px no-repeat; }
.run.active { background: linear-gradient(#76b9ed, #76b9ed) center bottom / 48px 2px no-repeat, #4b5a60; }
.weather { display: flex; align-items: center; margin-left: 195px; width: 123px; font-size: 14px; gap: 8px; letter-spacing: -.4px; }
.badge { font-size: 9px; fill: #fff; text-anchor: middle; }
.badge.n { font-size: 11px; }
.lang, .clock { display: flex; flex-direction: column; align-items: center; line-height: 17px; letter-spacing: -.4px; }
.lang { width: 36px; }
.clock { width: 66px; letter-spacing: -.5px; }
.notif { margin-left: 8px; }
```
